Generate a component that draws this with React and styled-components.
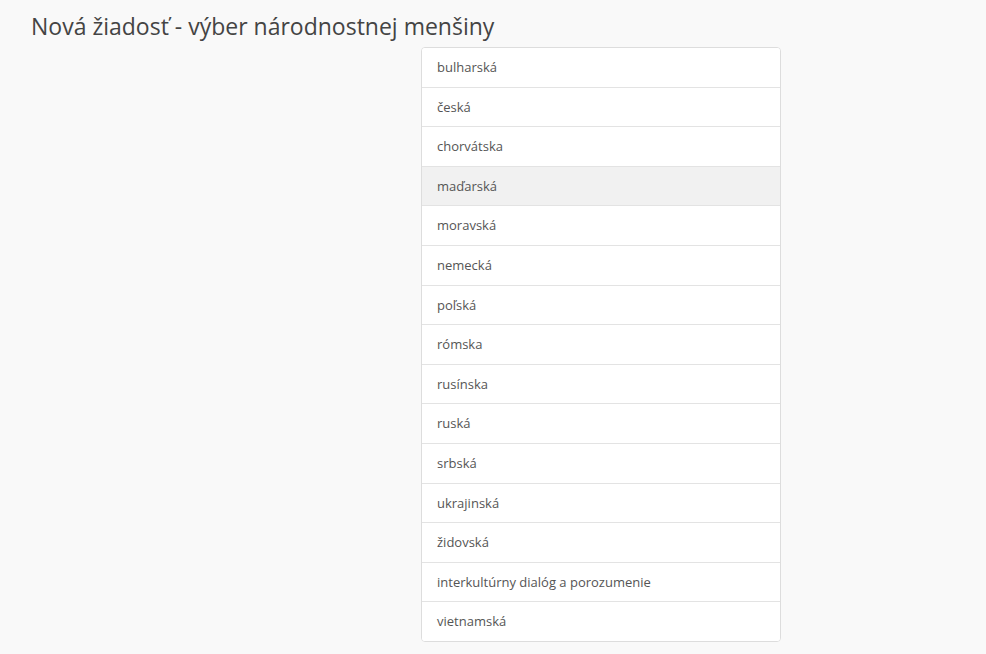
import React from "react";
import styled, { createGlobalStyle } from "styled-components";

const GlobalStyle = createGlobalStyle`
  html, body {
    margin: 0;
    padding: 0;
    background: #f9f9f9;
    font-family: "Open Sans", "Liberation Sans", sans-serif;
    color: #555;
  }
  * {
    box-sizing: border-box;
  }
`;

const Page = styled.div`
  padding: 10px 31px 0;
`;

const Title = styled.h1`
  margin: 0 0 4px;
  font-size: 23px;
  font-weight: 400;
  line-height: 33px;
  color: #444;
`;

const Layout = styled.div`
  display: grid;
  grid-template-columns: 390px 360px;
`;

const List = styled.ul`
  grid-column: 2;
  margin: 0;
  padding: 0;
  list-style: none;
  background: #fff;
  border: 1px solid #ddd;
  border-radius: 4px;
  overflow: hidden;
`;

const Item = styled.li`
  padding: 10px 15px;
  font-size: 13px;
  line-height: 18.6px;
  color: #555;
  background: ${({ active }) => (active ? "#f1f1f1" : "#fff")};
  border-top: 1px solid #e3e3e3;
  cursor: pointer;
  &:first-child {
    border-top: none;
  }
`;

const minorities = [
  "bulharská",
  "česká",
  "chorvátska",
  "maďarská",
  "moravská",
  "nemecká",
  "poľská",
  "rómska",
  "rusínska",
  "ruská",
  "srbská",
  "ukrajinská",
  "židovská",
  "interkultúrny dialóg a porozumenie",
  "vietnamská",
];

const App = () => {
  return (
    <Page>
      <GlobalStyle />
      <Title>Nová žiadosť - výber národnostnej menšiny</Title>
      <Layout>
        <List>
          {minorities.map((name) => (
            <Item key={name} active={name === "maďarská"}>
              {name}
            </Item>
          ))}
        </List>
      </Layout>
    </Page>
  );
};

export default App;
